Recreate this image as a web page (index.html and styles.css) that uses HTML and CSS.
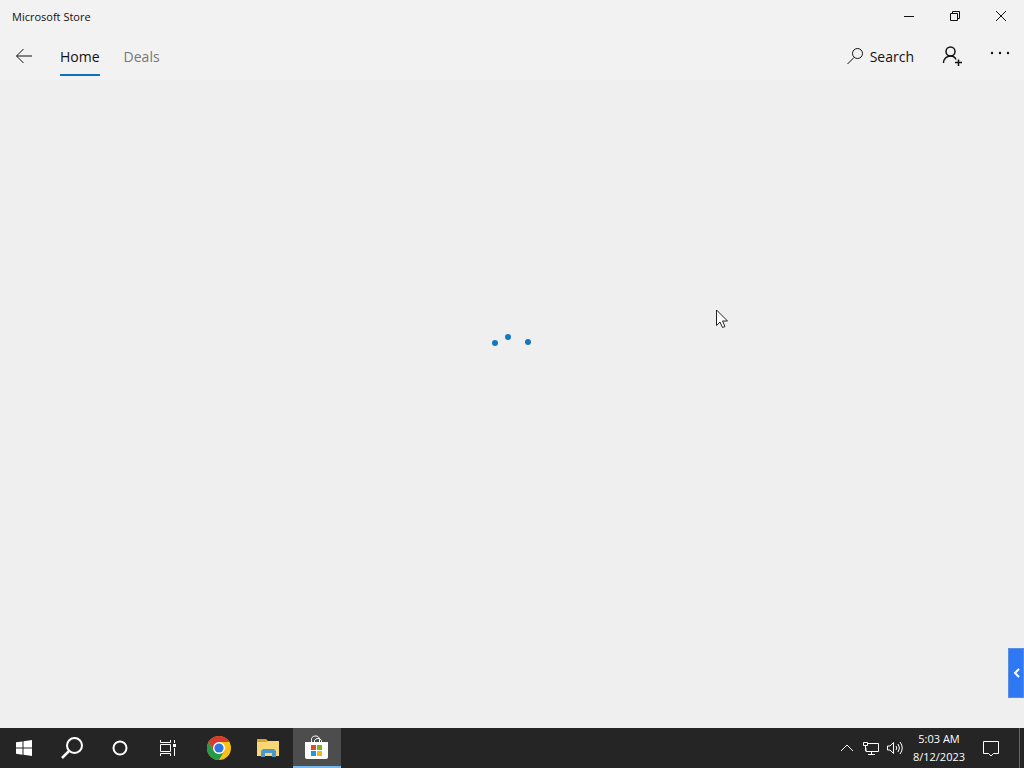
FILE: index.html
```html
<!DOCTYPE html>
<html lang="en">
	<head>
		<meta charset="utf-8">
		<title>Microsoft Store</title>
		<link rel="stylesheet" href="styles.css">
	</head>
	<body>
		<header class="titlebar">
			<span class="title">Microsoft Store</span>
			<div class="winbuttons">
				<button type="button" aria-label="Minimize"><svg width="12" height="12"><path d="M1 6.5h10"/></svg></button>
				<button type="button" aria-label="Restore"><svg width="12" height="12"><path d="M1.5 3.5h7v7h-7zM3.5 3.5v-2h7v7h-2"/></svg></button>
				<button type="button" aria-label="Close"><svg width="12" height="12"><path d="M1 1l10 10M11 1L1 11"/></svg></button>
			</div>
		</header>

		<nav class="navbar">
			<button type="button" class="back" aria-label="Back"><svg width="18" height="16"><path d="M17 8H1.5M8.5 1L1.5 8l7 7"/></svg></button>
			<a href="#" class="tab active">Home</a>
			<a href="#" class="tab">Deals</a>
			<div class="navright">
				<button type="button" class="search"><svg width="16" height="18"><circle cx="10.5" cy="6.5" r="5"/><path d="M7 10.5L.5 17"/></svg>Search</button>
				<button type="button" class="navicon" aria-label="Sign in"><svg class="person" width="20" height="22"><circle cx="8.500" cy="6.500" r="4.500"/><path d="M1.500 18c0-4 3-7 7-7 2.500 0 4.500 1 5.500 3.500M16.500 14.500v6.500M13 17.500h7"/></svg></button>
				<button type="button" class="navicon more" aria-label="See more"><svg class="dots" width="20" height="4"><circle cx="2" cy="2" r="1.2"/><circle cx="10" cy="2" r="1.2"/><circle cx="18" cy="2" r="1.2"/></svg></button>
			</div>
		</nav>

		<main class="content">
			<svg class="loader" width="44" height="14" role="img" aria-label="Loading"><circle cx="5" cy="9" r="3"/><circle cx="18" cy="3" r="3"/><circle cx="38" cy="8" r="3"/></svg>
			<button type="button" class="sidetab" aria-label="Open panel"><svg width="8" height="10"><path d="M7 1L3 5l4 4"/></svg></button>
			<svg class="pointer" width="13" height="20"><path d="M.5 1v15.500l3.500-3.500 2.500 5.500 2.500-1-2.500-5.500h5z"/></svg>
		</main>

		<footer class="taskbar">
			<button type="button" aria-label="Start"><svg width="16" height="16"><path fill="#fff" d="M0 2.300L6.500 1.400v6.100H0zM7.500 1.200L16 0v7.500H7.500zM0 8.500h6.500v6.200L0 13.800zM7.500 8.500H16V16l-8.500-1.200z"/></svg></button>
			<button type="button" aria-label="Search"><svg width="22" height="22"><g fill="none" stroke="#fff"><circle cx="13.500" cy="8.500" r="7.500" stroke-width="2"/><path stroke-width="2.500" d="M8 14l-7 7"/></g></svg></button>
			<button type="button" aria-label="Cortana"><svg width="16" height="16"><circle cx="8" cy="8" r="6.500" fill="none" stroke="#fff" stroke-width="2"/></svg></button>
			<button type="button" aria-label="Task View"><svg width="16" height="16"><path fill="none" stroke="#fff" d="M.5 0v2.500h10V0M.5 4.500h10v7H.5zM.5 16v-2.500h10V16M14.500 0v3M14.500 8v8"/><path fill="#fff" d="M13 4h3v3h-3z"/></svg></button>
			<div class="apps">
				<button type="button" aria-label="Google Chrome"><svg width="24" height="24">
					<circle cx="12" cy="12" r="12" fill="#fbc116"/>
					<path fill="#d93a2e" d="M1.600 6A12 12 0 0 1 22.400 6H12L6.800 15z"/>
					<path fill="#259b48" d="M1.600 6A12 12 0 0 0 12 24l5.200-9-5.200 3-5.200-3z"/>
					<circle cx="12" cy="12" r="6" fill="#fff"/><circle cx="12" cy="12" r="4.600" fill="#2f76e0"/></svg></button>
				<button type="button" aria-label="File Explorer"><svg width="22" height="18">
					<path fill="#dca32e" d="M0 0h9l2 2h10v4H0z"/><path fill="#f8d775" d="M0 3h9l2-1h11v15H0z"/>
					<path fill="#4c96c8" d="M4 18v-6l2-2h11l2 2v6h-4v-4H8v4z"/></svg></button>
				<button type="button" class="running" aria-label="Microsoft Store"><svg width="24" height="24">
					<path fill="none" stroke="#fff" d="M6.500 8V5.500a4 4 0 0 1 8-1V8M9.500 8V5.500a4 4 0 0 1 7 0V8"/>
					<path fill="#fff" d="M0 7h23v15q0 2-2 2H2q-2 0-2-2z"/>
					<path fill="#e04a25" d="M6 10h5v5H6z"/><path fill="#78b41e" d="M12 10h5v5h-5z"/>
					<path fill="#1d9bdc" d="M6 16h5v5H6z"/><path fill="#f7b51b" d="M12 16h5v5h-5z"/></svg></button>
			</div>
			<div class="tray">
				<button type="button" class="trayicon" aria-label="Show hidden icons"><svg width="14" height="8"><path d="M1 7l6-6 6 6"/></svg></button>
				<button type="button" class="trayicon" aria-label="Network"><svg width="18" height="14"><path d="M5 2.500h11.500v8H4V7M9.500 10.500v3M6 13.500h7M1.500 1.500h4v3h-4zM3.500 5v5"/></svg></button>
				<button type="button" class="trayicon" aria-label="Volume"><svg width="18" height="14"><path d="M1.500 5v4H4l3.500 3.500v-11L4 5zM10 5q1.500 2 0 4M12 3q3 4 0 8M14 1q4.500 6 0 12"/></svg></button>
				<button type="button" class="clock"><span>5:03 AM</span><span>8/12/2023</span></button>
				<button type="button" class="notify" aria-label="Notifications"><svg width="18" height="17"><path d="M1.500 1.500h15v12h-5L9 16l-2.500-2.500h-5z"/></svg></button>
				<button type="button" class="desktop" aria-label="Show desktop"></button>
			</div>
		</footer>
	</body>
</html>
```
FILE: styles.css
```css
*{
	box-sizing: border-box;
}

body{
	margin: 0;
	height: 100vh;
	display: flex;
	flex-direction: column;
	overflow: hidden;
	background-color: #efefef;
	color: #111;
	font-family: "Open Sans", "Noto Sans", sans-serif;
	font-size: 14px;
}

button{
	display: flex;
	align-items: center;
	justify-content: center;
	border: 0;
	padding: 0;
	background: none;
	color: inherit;
	font: inherit;
}

svg{
	display: block;
	flex: none;
}

.titlebar{
	display: flex;
	justify-content: space-between;
	height: 32px;
	padding-left: 12px;
	background-color: #f2f2f2;
	font-size: 11px;
	line-height: 34px;
}

.winbuttons{
	display: flex;
}

.winbuttons button{
	width: 46px;
}

.winbuttons svg,
.navbar svg{
	fill: none;
	stroke: #111;
}

.navbar{
	display: flex;
	height: 48px;
	background-color: #f2f2f2;
}

.back{
	width: 48px;
}

.tab{
	margin: 0 12px;
	height: 44px;
	border-bottom: 2px solid transparent;
	color: #777;
	line-height: 50px;
	text-decoration: none;
}

.tab.active{
	border-color: #0f73b8;
	color: #111;
}

.navright{
	display: flex;
	margin-left: auto;
}

.search{
	gap: 7px;
	padding: 0 14px 0 8px;
}

.navicon{
	width: 48px;
}

.navbar .person{
	stroke-width: 1.5;
}

.more{
	height: 42px;
}

.navbar .dots{
	fill: #111;
	stroke: none;
}

.content{
	position: relative;
	flex: 1;
	display: flex;
	align-items: flex-end;
	justify-content: flex-end;
	padding-bottom: 30px;
}

.loader{
	position: absolute;
	left: calc(50% - 22px);
	top: calc(40% - 5px);
	fill: #1478bd;
}

.pointer{
	position: absolute;
	left: 70%;
	top: 229px;
	margin-left: -1px;
	fill: #fff;
	stroke: #222;
}

.sidetab{
	width: 16px;
	height: 50px;
	border: 1px solid #5a8de0;
	background-color: #2f78f4;
}

.sidetab svg{
	fill: none;
	stroke: #fff;
	stroke-width: 2;
}

.taskbar{
	display: flex;
	height: 40px;
	background-color: #252525;
	color: #fff;
}

.taskbar button{
	width: 48px;
}

.apps{
	display: flex;
	gap: 1px;
	margin-left: 3px;
}

.taskbar .running{
	border-bottom: 2px solid #76b9ed;
	background-color: #4d4d4d;
}

.tray{
	display: flex;
	margin-left: auto;
}

.tray svg{
	fill: none;
	stroke: #fff;
}

.taskbar .trayicon{
	width: 24px;
}

.taskbar .clock{
	width: 64px;
	flex-direction: column;
	font-size: 11px;
	line-height: 18px;
}

.taskbar .notify{
	width: 40px;
	margin-right: 8px;
}

.taskbar .desktop{
	width: 5px;
	border-left: 1px solid #666;
}
```
